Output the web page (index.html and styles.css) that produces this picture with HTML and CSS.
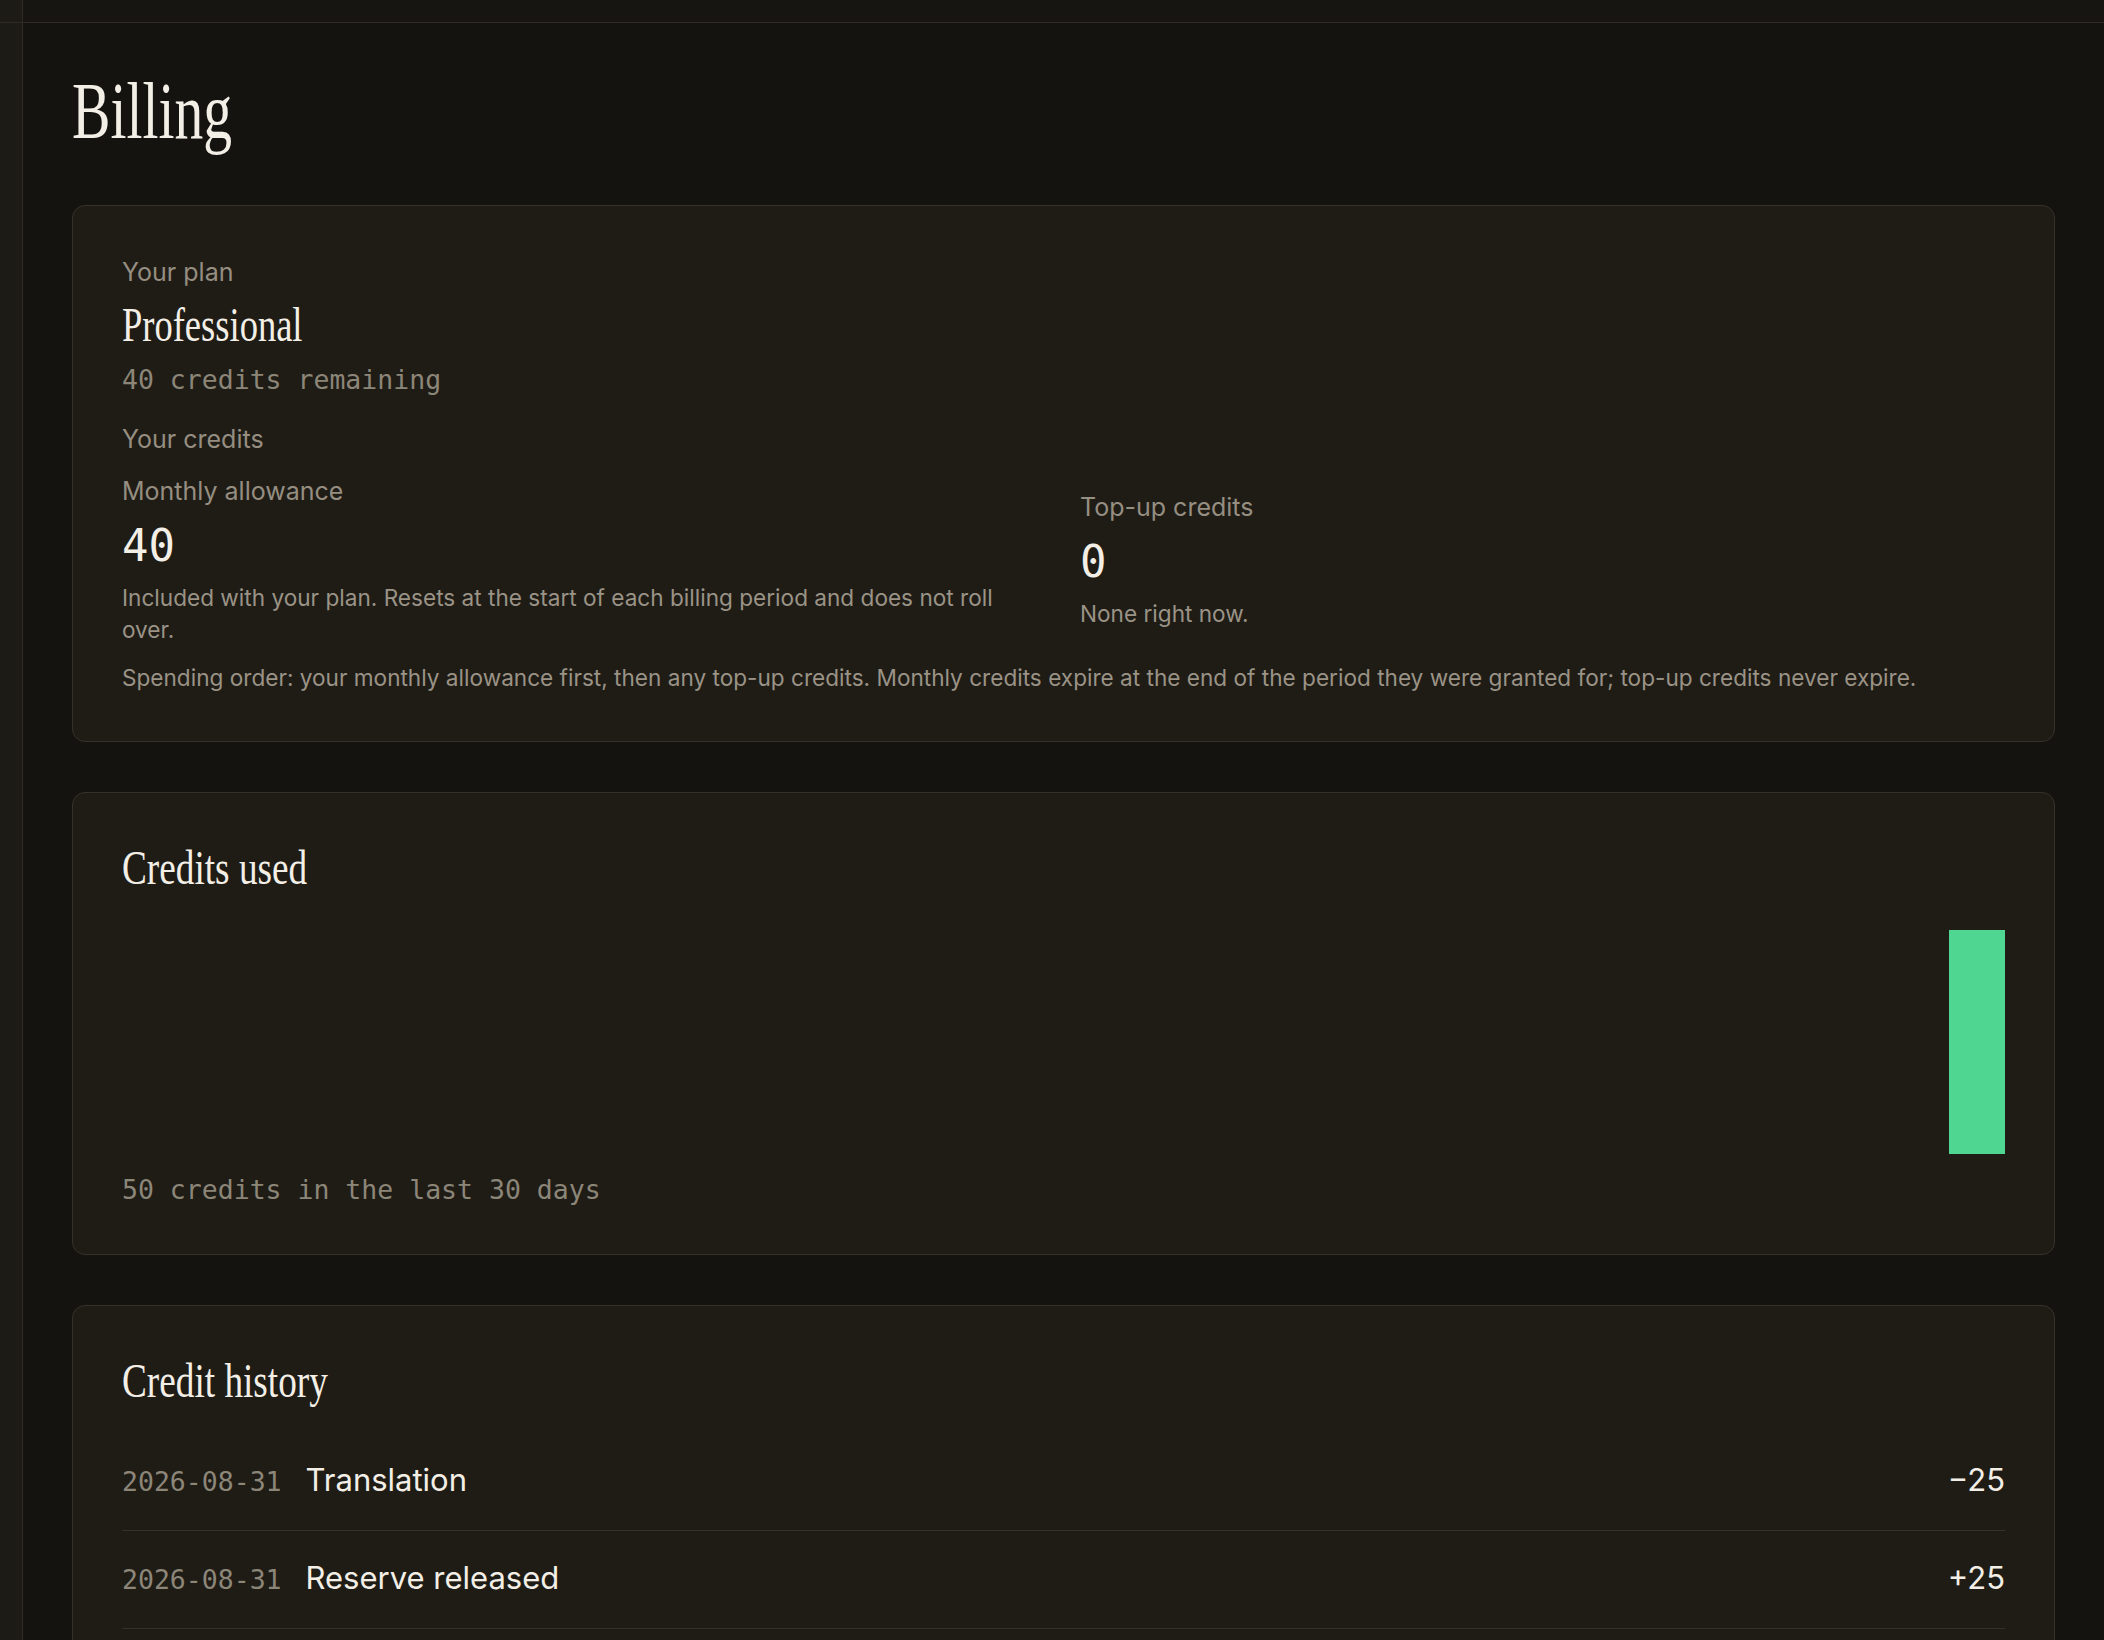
FILE: index.html
```html
<!DOCTYPE html>
<html lang="en">
<head>
    <meta charset="UTF-8">
    <title>Billing</title>
    <link rel="stylesheet" href="styles.css">
</head>
<body>
<div class="shell">
    <aside class="rail">
        <div class="rail-top"></div>
    </aside>

    <div class="main">
        <header class="topbar"></header>

        <main class="content">
            <h1 class="page-title">Billing</h1>

            <!-- plan summary -->
            <section class="card">
                <div class="label">Your plan</div>
                <div class="plan-name">Professional</div>
                <div class="mono-note">40 credits remaining</div>

                <div class="label credits-title">Your credits</div>
                <div class="credit-grid">
                    <div class="credit-col">
                        <div class="label">Monthly allowance</div>
                        <div class="big-number">40</div>
                        <p class="desc">Included with your plan. Resets at the start of each billing period and does not roll over.</p>
                    </div>
                    <div class="credit-col">
                        <div class="label">Top-up credits</div>
                        <div class="big-number">0</div>
                        <p class="desc">None right now.</p>
                    </div>
                </div>
                <p class="desc spend-order">Spending order: your monthly allowance first, then any top-up credits. Monthly credits expire at the end of the period they were granted for; top-up credits never expire.</p>
            </section>

            <!-- usage over the last 30 days, one bar per day -->
            <section class="card">
                <h2 class="card-title">Credits used</h2>
                <div class="chart">
                    <div class="bar" style="height:0%"></div>
                    <div class="bar" style="height:0%"></div>
                    <div class="bar" style="height:0%"></div>
                    <div class="bar" style="height:0%"></div>
                    <div class="bar" style="height:0%"></div>
                    <div class="bar" style="height:0%"></div>
                    <div class="bar" style="height:0%"></div>
                    <div class="bar" style="height:0%"></div>
                    <div class="bar" style="height:0%"></div>
                    <div class="bar" style="height:0%"></div>
                    <div class="bar" style="height:0%"></div>
                    <div class="bar" style="height:0%"></div>
                    <div class="bar" style="height:0%"></div>
                    <div class="bar" style="height:0%"></div>
                    <div class="bar" style="height:0%"></div>
                    <div class="bar" style="height:0%"></div>
                    <div class="bar" style="height:0%"></div>
                    <div class="bar" style="height:0%"></div>
                    <div class="bar" style="height:0%"></div>
                    <div class="bar" style="height:0%"></div>
                    <div class="bar" style="height:0%"></div>
                    <div class="bar" style="height:0%"></div>
                    <div class="bar" style="height:0%"></div>
                    <div class="bar" style="height:0%"></div>
                    <div class="bar" style="height:0%"></div>
                    <div class="bar" style="height:0%"></div>
                    <div class="bar" style="height:0%"></div>
                    <div class="bar" style="height:0%"></div>
                    <div class="bar" style="height:0%"></div>
                    <div class="bar" style="height:100%"></div>
                </div>
                <div class="mono-note chart-caption">50 credits in the last 30 days</div>
            </section>

            <section class="card">
                <h2 class="card-title">Credit history</h2>
                <ul class="history">
                    <li class="history-row">
                        <span class="history-date">2026-08-31</span>
                        <span class="history-what">Translation</span>
                        <span class="history-amount">&minus;25</span>
                    </li>
                    <li class="history-row">
                        <span class="history-date">2026-08-31</span>
                        <span class="history-what">Reserve released</span>
                        <span class="history-amount">+25</span>
                    </li>
                    <li class="history-row">
                        <span class="history-date">2026-08-31</span>
                        <span class="history-what">Reserve held</span>
                        <span class="history-amount">&minus;25</span>
                    </li>
                    <li class="history-row">
                        <span class="history-date">2026-08-01</span>
                        <span class="history-what">Monthly allowance</span>
                        <span class="history-amount">+40</span>
                    </li>
                </ul>
            </section>
        </main>
    </div>
</div>
</body>
</html>
```

FILE: styles.css
```css
body {
    margin: 0;
    background-color: #141310;
    color: #f3efe6;
    font-family: Inter, "Liberation Sans", sans-serif;
}

.shell {
    display: flex;
    min-height: 100vh;
}

/* collapsed side rail */
.rail {
    flex: none;
    width: 22px;
    background-color: #1d1b16;
    border-right: 1px solid #2f2b24;
}

.rail-top {
    height: 22px;
    border-bottom: 1px solid #2f2b24;
}

.main {
    flex: 1;
    min-width: 0;
}

.topbar {
    height: 22px;
    background-color: #171512;
    border-bottom: 1px solid #2f2b24;
}

.content {
    padding: 44px 49px 60px;
}

/* serif headings are set narrow */
.page-title,
.plan-name,
.card-title {
    font-family: "Liberation Serif", "DejaVu Serif", serif;
    font-weight: 400;
    color: #f3efe6;
    transform-origin: left center;
}

.page-title {
    margin: 0 0 50px;
    font-size: 80px;
    line-height: 1.1;
    transform: scaleX(.72);
}

.card {
    background-color: #1f1c16;
    border: 1px solid #35312a;
    border-radius: 13px;
    padding: 49px 49px 48px;
}

.card + .card {
    margin-top: 50px;
}

.label {
    font-size: 25px;
    line-height: 34px;
    color: #958e81;
}

.plan-name {
    margin-top: 10px;
    font-size: 49px;
    line-height: 1.05;
    transform: scaleX(.745);
}

.mono-note {
    font-family: "DejaVu Sans Mono", "Liberation Mono", monospace;
    font-size: 26.5px;
    line-height: 32px;
    color: #8c8679;
}

.plan-name + .mono-note {
    margin-top: 14px;
}

.credits-title {
    margin-top: 26px;
}

.credit-grid {
    display: grid;
    grid-template-columns: 1fr 1fr;
    column-gap: 33px;
    align-items: center;
    margin-top: 18px;
}

.big-number {
    margin-top: 12px;
    font-family: "DejaVu Sans Mono", "Liberation Mono", monospace;
    font-size: 44px;
    line-height: 1.2;
    color: #f3efe6;
}

.desc {
    margin: 9px 0 0;
    font-size: 22.6px;
    line-height: 31.7px;
    color: #9a9386;
}

.spend-order {
    margin-top: 16px;
}

.card-title {
    margin: 0;
    font-size: 49px;
    line-height: 1.05;
    transform: scaleX(.76);
}

.chart {
    display: flex;
    align-items: flex-end;
    gap: 7px;
    height: 224px;
    margin-top: 36px;
}

.bar {
    flex: 1;
    background-color: #4fd791;
}

.chart-caption {
    margin-top: 20px;
}

.history {
    list-style: none;
    margin: 27px 0 0;
    padding: 0;
}

.history-row {
    display: flex;
    align-items: baseline;
    gap: 24px;
    padding: 27px 0 28px;
    border-bottom: 1px solid #35312a;
    line-height: 40px;
}

.history-date {
    font-family: "DejaVu Sans Mono", "Liberation Mono", monospace;
    font-size: 26.5px;
    color: #8c8679;
}

.history-what {
    flex: 1;
    font-size: 31px;
    color: #f3efe6;
}

.history-amount {
    font-size: 31px;
    color: #f3efe6;
}
```
